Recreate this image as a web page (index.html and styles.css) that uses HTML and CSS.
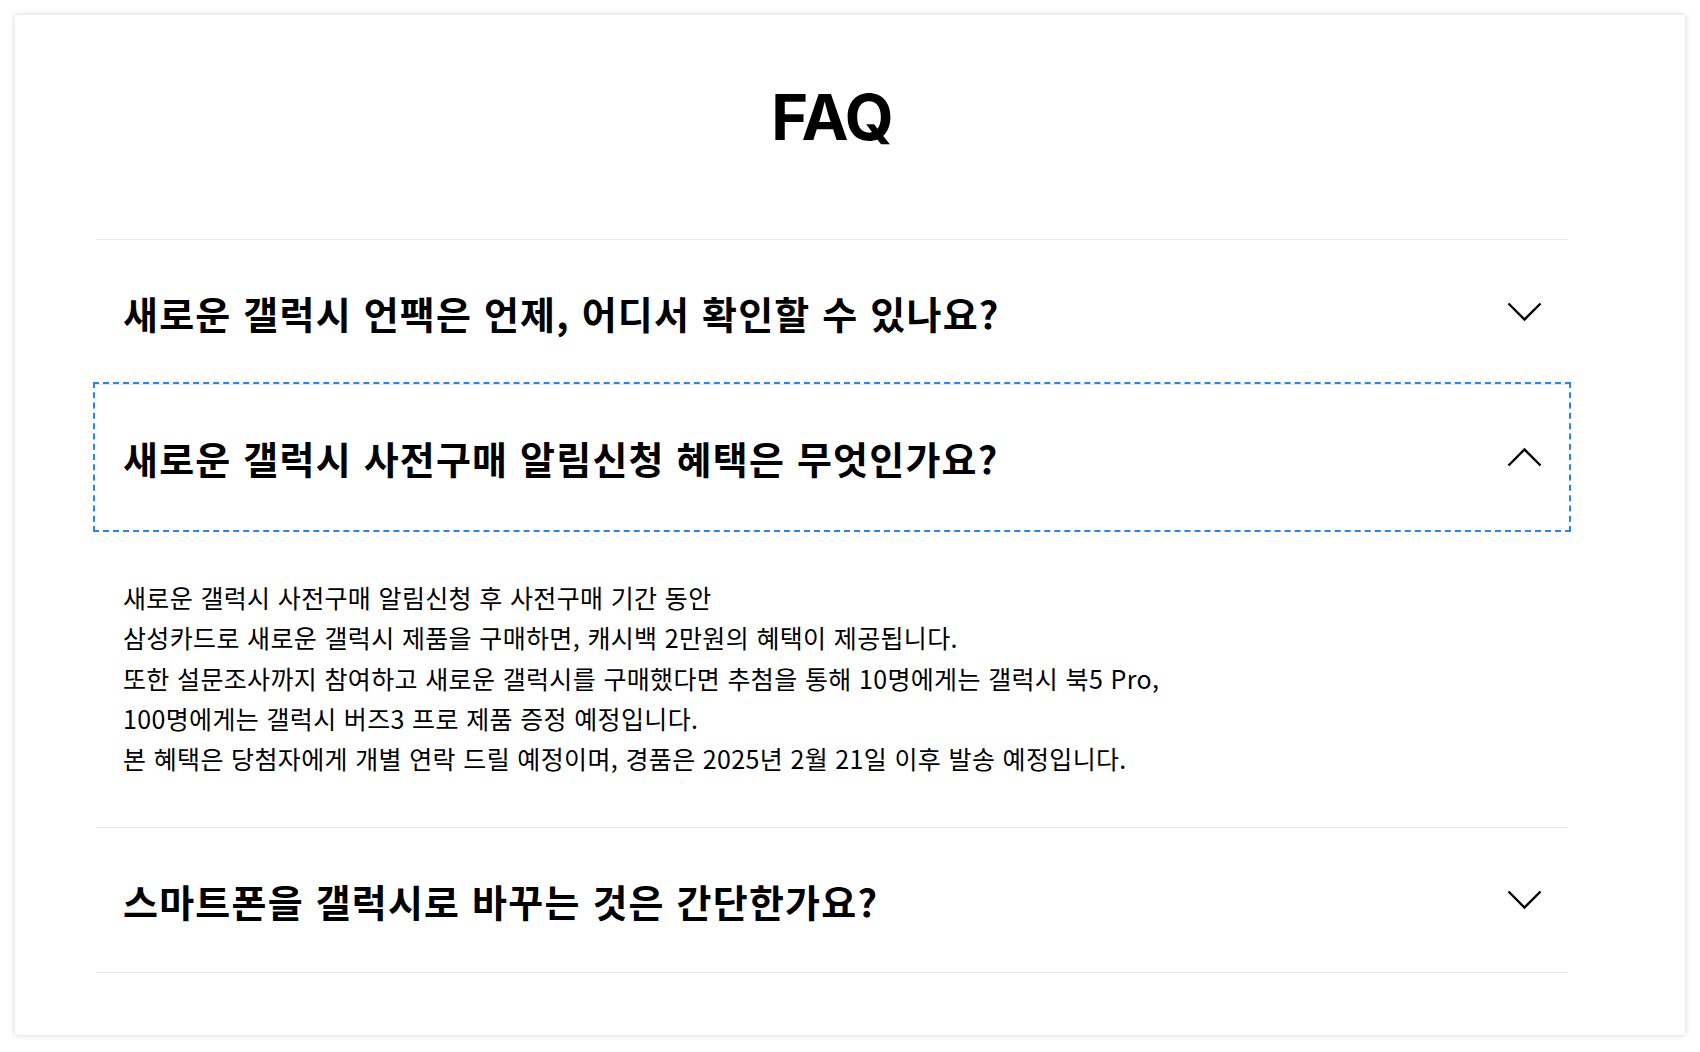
FILE: index.html
```html
<!DOCTYPE html>
<html lang="ko">
<head>
  <meta charset="UTF-8">
  <title>FAQ</title>
  <link rel="stylesheet" href="styles.css">
</head>
<body>

  <!-- FAQ card -->
  <section class="faq">
    <h2 class="faq-title">FAQ</h2>

    <ul class="faq-list">
      <li class="faq-item">
        <button class="faq-question" type="button">
          <span>새로운 갤럭시 언팩은 언제, 어디서 확인할 수 있나요?</span>
          <svg class="chevron" width="35" height="20" viewBox="0 0 35 20"><polyline points="1.5,1.5 17.5,17.5 33.5,1.5"/></svg>
        </button>
      </li>

      <li class="faq-item open">
        <button class="faq-question focused" type="button">
          <span>새로운 갤럭시 사전구매 알림신청 혜택은 무엇인가요?</span>
          <svg class="chevron" width="35" height="20" viewBox="0 0 35 20"><polyline points="1.5,18.5 17.5,2.5 33.5,18.5"/></svg>
        </button>
        <div class="faq-answer">
          <p>새로운 갤럭시 사전구매 알림신청 후 사전구매 기간 동안<br>
          삼성카드로 새로운 갤럭시 제품을 구매하면, 캐시백 2만원의 혜택이 제공됩니다.<br>
          또한 설문조사까지 참여하고 새로운 갤럭시를 구매했다면 추첨을 통해 10명에게는 갤럭시 북5 Pro,<br>
          100명에게는 갤럭시 버즈3 프로 제품 증정 예정입니다.<br>
          본 혜택은 당첨자에게 개별 연락 드릴 예정이며, 경품은 2025년 2월 21일 이후 발송 예정입니다.</p>
        </div>
      </li>

      <li class="faq-item">
        <button class="faq-question" type="button">
          <span>스마트폰을 갤럭시로 바꾸는 것은 간단한가요?</span>
          <svg class="chevron" width="35" height="20" viewBox="0 0 35 20"><polyline points="1.5,1.5 17.5,17.5 33.5,1.5"/></svg>
        </button>
      </li>
    </ul>
  </section>

</body>
</html>
```

FILE: styles.css
```css
* {
  box-sizing: border-box;
}

body {
  margin: 0;
  padding: 15px;
  background: #fff;
  font-family: "Noto Sans CJK KR", "Noto Sans", sans-serif;
  color: #000;
}

.faq {
  background: #fff;
  box-shadow: 0 0 6px rgba(0, 0, 0, 0.18);
  padding: 71px 117px 62px 81px;
}

.faq-title {
  margin: 0 0 90px;
  font-family: Inter, "Noto Sans", sans-serif;
  font-weight: 700;
  font-size: 63px;
  line-height: 1;
  letter-spacing: -1px;
  text-align: center;
}

.faq-list {
  list-style: none;
  margin: 0;
  padding: 0;
  border-bottom: 1px solid #e8e8e8;
}

.faq-item {
  border-top: 1px solid #e8e8e8;
}

.faq-question {
  display: flex;
  align-items: center;
  justify-content: space-between;
  width: 100%;
  height: 144px;
  padding: 0 26px 0 27px;
  border: none;
  background: none;
  font-family: inherit;
  font-size: 38px;
  font-weight: 700;
  letter-spacing: 1.2px;
  color: #000;
  text-align: left;
  cursor: pointer;
}

.faq-question.focused {
  outline: 2px dashed #1f86ff;
  outline-offset: 1px;
}

.chevron {
  flex: none;
}

.chevron polyline {
  fill: none;
  stroke: #000;
  stroke-width: 2.4;
}

.faq-answer {
  padding: 48px 27px 49px;
}

.faq-answer p {
  margin: 0;
  font-size: 25px;
  line-height: 40.3px;
  letter-spacing: 0.35px;
  font-weight: 400;
}
```
